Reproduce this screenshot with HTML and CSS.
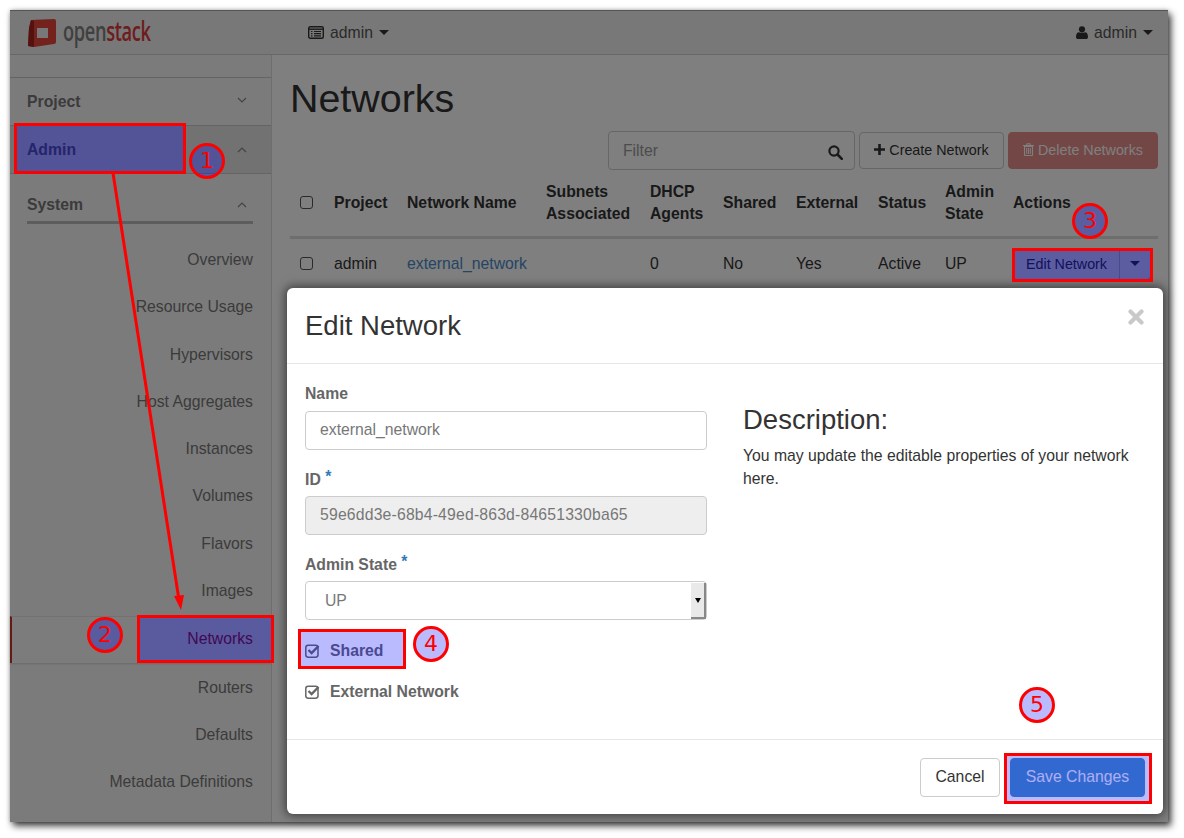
FILE: index.html
```html
<!DOCTYPE html>
<html lang="en">
<head>
    <meta charset="UTF-8">
    <meta name="viewport" content="width=device-width, initial-scale=1.0">
    <title>Networks</title>
    <link rel="stylesheet" href="styles.css">
</head>
<body>
    <div class="window">
        <header class="topbar">
            <div class="logo">
                <svg class="logo-mark" viewBox="0 0 30 30">
                    <path d="M4 2 L27 1 Q29 1 29 3 L29 24 Q29 26 27 26 L7 29 L1 28 L2 10 Z" fill="#e8443a"/>
                    <path d="M1 28 L7 29 L7 3 L4 2 L2 10 Z" fill="#a8241f"/>
                    <rect x="10" y="10" width="11" height="10" fill="#f0f0f0"/>
                </svg>
                <span class="logo-text"><span class="logo-open">open</span><span class="logo-stack">stack</span></span>
            </div>
            <div class="topbar-menu project-menu">
                <svg class="icon-list" viewBox="0 0 16 13">
                    <rect x="0.7" y="0.7" width="14.6" height="11.6" rx="1.5" fill="none" stroke="#333" stroke-width="1.4"/>
                    <path d="M1 3.2 H15" stroke="#333" stroke-width="1.4"/>
                    <path d="M3 5.5 H4.5 M6 5.5 H13 M3 7.7 H4.5 M6 7.7 H13 M3 9.9 H4.5 M6 9.9 H13" stroke="#333" stroke-width="1.2"/>
                </svg>
                admin <span class="caret"></span>
            </div>
            <div class="topbar-menu user-menu">
                <svg class="icon-user" viewBox="0 0 12 13">
                    <circle cx="6" cy="3.3" r="3.1" fill="#333"/>
                    <path d="M0 11 C0 8 1.2 6.2 3 6.2 C4 7 8 7 9 6.2 C10.8 6.2 12 8 12 11 C12 12.4 11 13 10 13 H2 C1 13 0 12.4 0 11 Z" fill="#333"/>
                </svg>
                admin <span class="caret"></span>
            </div>
        </header>

        <div class="layout">
            <nav class="sidebar">
                <div class="nav-group">Project <svg class="chev chev-down" viewBox="0 0 10 6"><path d="M1 1 L5 5 L9 1"/></svg></div>
                <div class="nav-group nav-group-open">Admin <svg class="chev" viewBox="0 0 10 6"><path d="M1 5 L5 1 L9 5"/></svg></div>
                <div class="nav-section">System <svg class="chev" viewBox="0 0 10 6"><path d="M1 5 L5 1 L9 5"/></svg></div>
                <ul class="nav-list">
                    <li>Overview</li>
                    <li>Resource Usage</li>
                    <li>Hypervisors</li>
                    <li>Host Aggregates</li>
                    <li>Instances</li>
                    <li>Volumes</li>
                    <li>Flavors</li>
                    <li>Images</li>
                    <li class="active">Networks</li>
                    <li>Routers</li>
                    <li>Defaults</li>
                    <li>Metadata Definitions</li>
                </ul>
            </nav>

            <main class="content">
                <h1>Networks</h1>
                <div class="toolbar">
                    <div class="filter">
                        <span>Filter</span>
                        <svg class="icon-search" viewBox="0 0 15 15">
                            <circle cx="6" cy="6" r="4.6" fill="none" stroke="#333" stroke-width="2.2"/>
                            <path d="M9.5 9.5 L13.8 13.8" stroke="#333" stroke-width="2.6" stroke-linecap="round"/>
                        </svg>
                    </div>
                    <button class="btn btn-create"><svg class="icon-plus" viewBox="0 0 11 11"><path d="M5.5 0 V11 M0 5.5 H11" stroke="#333" stroke-width="2.6"/></svg>Create Network</button>
                    <button class="btn btn-delete"><svg class="icon-trash" viewBox="0 0 11 13"><path d="M0 2.5 H11 M3.5 2.5 L4.2 0.7 H6.8 L7.5 2.5" fill="none" stroke="#fff" stroke-width="1.1"/><path d="M1.5 3.5 H9.5 V12 Q9.5 12.6 9 12.6 H2 Q1.5 12.6 1.5 12 Z" fill="none" stroke="#fff" stroke-width="1.1"/><path d="M3.7 5 V11 M5.5 5 V11 M7.3 5 V11" stroke="#fff" stroke-width="1"/></svg>Delete Networks</button>
                </div>
                <table class="networks">
                    <colgroup>
                        <col class="c-check"><col class="c-project"><col class="c-name"><col class="c-subnets"><col class="c-dhcp"><col class="c-shared"><col class="c-external"><col class="c-status"><col class="c-state"><col class="c-actions">
                    </colgroup>
                    <thead>
                        <tr>
                            <th><span class="check"></span></th>
                            <th>Project</th>
                            <th>Network Name</th>
                            <th>Subnets Associated</th>
                            <th>DHCP Agents</th>
                            <th>Shared</th>
                            <th>External</th>
                            <th>Status</th>
                            <th>Admin State</th>
                            <th>Actions</th>
                        </tr>
                    </thead>
                    <tbody>
                        <tr>
                            <td><span class="check"></span></td>
                            <td>admin</td>
                            <td><a class="link">external_network</a></td>
                            <td></td>
                            <td>0</td>
                            <td>No</td>
                            <td>Yes</td>
                            <td>Active</td>
                            <td>UP</td>
                            <td>
                                <div class="btn-group">
                                    <span class="btn-main">Edit Network</span><span class="btn-split"><span class="caret"></span></span>
                                </div>
                            </td>
                        </tr>
                    </tbody>
                </table>
            </main>
        </div>

        <div class="backdrop"></div>

        <div class="modal">
            <div class="modal-header">
                <h3>Edit Network</h3>
                <svg class="icon-close" viewBox="0 0 16 16"><path d="M2.5 2.5 L13.5 13.5 M13.5 2.5 L2.5 13.5" stroke="#c9c9c9" stroke-width="4.2" stroke-linecap="round"/></svg>
            </div>
            <div class="modal-body">
                <form class="edit-form">
                    <label class="field-label first">Name</label>
                    <div class="input">external_network</div>
                    <label class="field-label">ID <span class="req">*</span></label>
                    <div class="input input-disabled">59e6dd3e-68b4-49ed-863d-84651330ba65</div>
                    <label class="field-label">Admin State <span class="req">*</span></label>
                    <div class="select">UP<span class="select-arrow"><span class="select-caret"></span></span></div>
                    <div class="checkline shared">
                        <svg class="icon-check" viewBox="0 0 15 14"><rect x="0.8" y="1.2" width="12.2" height="12" rx="2.4" fill="none" stroke="#666" stroke-width="1.5"/><path d="M3.5 6 L6.6 9 L13.5 2" fill="none" stroke="#666" stroke-width="2.4"/></svg>
                        Shared
                    </div>
                    <div class="checkline external">
                        <svg class="icon-check" viewBox="0 0 15 14"><rect x="0.8" y="1.2" width="12.2" height="12" rx="2.4" fill="none" stroke="#666" stroke-width="1.5"/><path d="M3.5 6 L6.6 9 L13.5 2" fill="none" stroke="#666" stroke-width="2.4"/></svg>
                        External Network
                    </div>
                </form>
                <div class="description">
                    <h3>Description:</h3>
                    <p>You may update the editable properties of your network here.</p>
                </div>
            </div>
            <div class="modal-footer">
                <button class="btn btn-cancel">Cancel</button>
                <button class="btn btn-save">Save Changes</button>
            </div>
        </div>
    </div>

    <!-- callouts drawn on top of the screenshot -->
    <div class="hl hl-1"></div>
    <div class="hl hl-2"></div>
    <div class="hl hl-3"></div>
    <div class="hl hl-4"></div>
    <div class="hl hl-5"></div>
    <svg class="arrow" viewBox="0 0 1184 838">
        <path d="M113 173 L179 600" stroke="#f00" stroke-width="3" fill="none"/>
        <path d="M181 610 L174 596 L184 595 Z" fill="#f00"/>
    </svg>
    <div class="num num-1">1</div>
    <div class="num num-2">2</div>
    <div class="num num-3">3</div>
    <div class="num num-4">4</div>
    <div class="num num-5">5</div>
</body>
</html>
```

FILE: styles.css
```css
* {
    box-sizing: border-box;
}
html, body {
    margin: 0;
    height: 838px;
}
body {
    position: relative;
    width: 1184px;
    padding: 10px 16px 16px 10px;
    overflow: hidden;
    background-color: #fff;
    font-family: "Liberation Sans", Arial, sans-serif;
    font-size: 15.75px;
    line-height: 22px;
    color: #333;
}
.window {
    position: relative;
    width: 1158px;
    height: 812px;
    background-color: #fff;
    border-top: 1px solid #555;
    box-shadow: 3px 4px 7px rgba(0,0,0,.75), 0 0 4px rgba(0,0,0,.25);
}

/* top bar */
.topbar {
    display: flex;
    align-items: center;
    height: 44px;
    background-color: #f0f0f0;
    border-bottom: 1px solid #d0d0d0;
}
.logo {
    display: flex;
    align-items: center;
    width: 298px;
    padding-left: 17px;
}
.logo-mark {
    width: 30px;
    height: 30px;
}
.logo-text {
    display: inline-block;
    margin: 0 0 4px 6px;
    font-family: "Open Sans", sans-serif;
    font-size: 27px;
    font-weight: 600;
    line-height: 30px;
    letter-spacing: -0.5px;
    transform: scaleX(.675);
    transform-origin: left center;
}
.logo-open {
    color: #808080;
}
.logo-stack {
    color: #dd3a3a;
}
.topbar-menu {
    display: flex;
    align-items: center;
    color: #555;
    gap: 6px;
}
.user-menu {
    margin-left: auto;
    margin-right: 15px;
}
.icon-list {
    width: 16px;
    height: 13px;
}
.icon-user {
    width: 12px;
    height: 13px;
}
.caret {
    display: inline-block;
    width: 0;
    height: 0;
    border-top: 5px solid #333;
    border-left: 5px solid transparent;
    border-right: 5px solid transparent;
}

/* sidebar */
.layout {
    display: flex;
    height: 767px;
}
.sidebar {
    width: 262px;
    padding-top: 22px;
    background-color: #f6f6f6;
    border-right: 1px solid #dcdcdc;
    color: #777;
}
.nav-group {
    display: flex;
    justify-content: space-between;
    align-items: center;
    height: 48px;
    padding: 0 24px 0 17px;
    border-top: 1px solid #c8c8c8;
    font-weight: 700;
}
.nav-group-open {
    height: 49px;
    padding-top: 1px;
    background-color: #e4e4e4;
    border-bottom: 1px solid #c8c8c8;
    color: #666;
}
.nav-section {
    display: flex;
    justify-content: space-between;
    align-items: center;
    height: 49px;
    margin: 1px 18px 0 17px;
    padding: 14px 6px 0 0;
    border-bottom: 3px solid #bbb;
    font-weight: 700;
}
.chev {
    width: 10px;
    height: 6px;
    fill: none;
    stroke: #888;
    stroke-width: 1.2;
}
.chev-down {
    margin-bottom: 4px;
}
.nav-list {
    list-style: none;
    margin: 13px 0 0;
    padding: 0;
}
.nav-list li {
    height: 47.3px;
    padding: 12px 18px 0 0;
    text-align: right;
}
.nav-list .active {
    height: 47px;
    margin-top: 1px;
    padding-top: 11px;
    background-color: #f8f8f8;
    border-top: 1px solid #e4e4e4;
    border-left: 2px solid #c8352b;
    box-shadow: 0 1px 2px rgba(0,0,0,.15);
    color: #b02020;
}
.nav-list .active + li {
    margin-top: 1.5px;
}

/* main */
.content {
    flex: 1;
    padding: 0 10px 0 18px;
}
h1 {
    margin: 20px 0 0;
    font-size: 39.4px;
    font-weight: 400;
    line-height: 46px;
    color: #333;
}
.toolbar {
    display: flex;
    justify-content: flex-end;
    align-items: center;
    gap: 4px;
    margin-top: 10px;
}
.filter {
    display: flex;
    justify-content: space-between;
    align-items: center;
    width: 247px;
    height: 39px;
    padding: 0 11px 0 14px;
    background-color: #fff;
    border: 1px solid #ccc;
    border-radius: 4px;
    color: #999;
}
.icon-search {
    width: 15px;
    height: 15px;
    margin-top: 3px;
}
.btn {
    display: inline-flex;
    align-items: center;
    justify-content: center;
    height: 37px;
    padding: 0 0 2px;
    border: 1px solid #ccc;
    border-radius: 4px;
    background-color: #fff;
    font-family: inherit;
    font-size: 14.3px;
    color: #333;
}
.btn-create {
    width: 145px;
}
.icon-plus {
    width: 11px;
    height: 11px;
    margin-right: 4px;
}
.btn-delete {
    width: 150px;
    background-color: #d9534f;
    border-color: #d9534f;
    color: #fff;
    opacity: .65;
}
.icon-trash {
    width: 11px;
    height: 13px;
    margin-right: 4px;
}

/* table */
.networks {
    width: 868px;
    border-collapse: collapse;
    table-layout: fixed;
}
.c-check { width: 36px; }
.c-project { width: 73px; }
.c-name { width: 139px; }
.c-subnets { width: 104px; }
.c-dhcp { width: 73px; }
.c-shared { width: 73px; }
.c-external { width: 82px; }
.c-status { width: 67px; }
.c-state { width: 68px; }
.c-actions { width: 153px; }
th, td {
    padding: 0 8px;
    text-align: left;
    vertical-align: middle;
}
th {
    height: 67px;
    font-weight: 700;
    border-bottom: 3px solid #ddd;
}
td {
    height: 52px;
}
.check {
    display: block;
    width: 13px;
    height: 13px;
    margin-left: 2px;
    background-color: #fff;
    border: 1px solid #555;
    border-radius: 3px;
}
.link {
    color: #4a8ac8;
}
.btn-group {
    display: flex;
    width: 138px;
    height: 32px;
    background-color: #fff;
    border: 1px solid #ccc;
    border-radius: 4px;
    font-size: 14.3px;
    line-height: 30px;
}
.btn-main {
    width: 106px;
    text-align: center;
    border-right: 1px solid #ccc;
}
.btn-split {
    display: flex;
    flex: 1;
    align-items: center;
    justify-content: center;
}

/* dim layer + dialog */
.backdrop {
    position: absolute;
    inset: 0;
    background-color: rgba(0,0,0,.5);
}
.modal {
    position: absolute;
    left: 277px;
    top: 277px;
    width: 876px;
    height: 526px;
    background-color: #fff;
    border-radius: 6px;
    box-shadow: 0 0 10px 2px rgba(0,0,0,.5);
}
.modal-header {
    position: relative;
    height: 76px;
    padding: 22px 18px 0;
    border-bottom: 1px solid #e5e5e5;
}
h3 {
    margin: 0;
    font-size: 27.5px;
    font-weight: 400;
    line-height: 32px;
    color: #333;
}
.icon-close {
    position: absolute;
    right: 19px;
    top: 21px;
    width: 16px;
    height: 16px;
}
.modal-body {
    display: flex;
    height: 375px;
    padding: 0 18px;
}
.edit-form {
    width: 402px;
    color: #666;
}
.field-label {
    display: block;
    height: 22px;
    margin: 19px 0 5px;
    font-weight: 700;
}
.field-label.first {
    margin-bottom: 6px;
}
.req {
    position: relative;
    top: -3px;
    color: #337ab7;
}
.input {
    height: 39px;
    padding: 7px 14px;
    background-color: #fff;
    border: 1px solid #ccc;
    border-radius: 4px;
    color: #777;
}
.input-disabled {
    background-color: #eee;
    letter-spacing: .18px;
}
.select {
    position: relative;
    height: 39px;
    padding: 8px 19px;
    border: 1px solid #ccc;
    border-radius: 4px;
    color: #777;
}
.select-arrow {
    position: absolute;
    right: 0;
    top: 1px;
    bottom: 0;
    display: flex;
    align-items: center;
    justify-content: center;
    width: 15px;
    background-color: #e9e9e9;
    border-right: 2px solid #888;
    border-bottom: 2px solid #888;
}
.select-caret {
    width: 0;
    height: 0;
    border-top: 5px solid #000;
    border-left: 3px solid transparent;
    border-right: 3px solid transparent;
}
.checkline {
    display: flex;
    align-items: center;
    gap: 10px;
    margin-top: 19px;
    font-weight: 700;
}
.checkline.shared {
    margin-top: 20px;
}
.icon-check {
    width: 15px;
    height: 14px;
}
.description {
    width: 400px;
    margin-left: 36px;
    padding-top: 40px;
}
.description p {
    margin: 8px 0 0;
    line-height: 23px;
    color: #333;
}
.modal-footer {
    display: flex;
    justify-content: flex-end;
    gap: 10px;
    padding: 18px 18px 0;
    border-top: 1px solid #e5e5e5;
}
.btn-cancel {
    width: 80px;
    height: 39px;
    font-size: 15.75px;
}
.btn-save {
    width: 135px;
    height: 39px;
    background-color: #4490c0;
    border-color: #4490c0;
    font-size: 15.75px;
    color: #eee;
}

/* callouts */
.hl {
    position: absolute;
    border: 3px solid #f00;
    background-color: rgba(0,0,255,.27);
}
.hl-1 { left: 14px; top: 123px; width: 172px; height: 51px; }
.hl-2 { left: 137px; top: 615px; width: 137px; height: 48px; }
.hl-3 { left: 1012px; top: 248px; width: 141px; height: 34px; }
.hl-4 { left: 298px; top: 629px; width: 108px; height: 40px; }
.hl-5 { left: 1004px; top: 753px; width: 148px; height: 51px; }
.arrow {
    position: absolute;
    left: 0;
    top: 0;
    width: 1184px;
    height: 838px;
}
.num {
    position: absolute;
    width: 36px;
    height: 36px;
    border: 3px solid #f00;
    border-radius: 50%;
    background-color: rgba(0,0,255,.27);
    font-family: "DejaVu Sans", sans-serif;
    font-size: 22px;
    line-height: 30px;
    text-align: center;
    color: #f00;
}
.num-1 { left: 189px; top: 143px; }
.num-2 { left: 87px; top: 617px; }
.num-3 { left: 1072px; top: 203px; }
.num-4 { left: 413px; top: 626px; }
.num-5 { left: 1019px; top: 687px; }
```
